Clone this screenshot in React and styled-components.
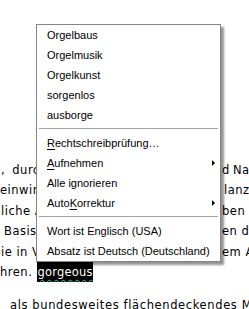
import React from "react";
import styled, { createGlobalStyle } from "styled-components";

const GlobalStyle = createGlobalStyle`
  html, body { margin: 0; padding: 0; background: #ffffff; }
`;

const Page = styled.div`
  position: relative;
  width: 249px;
  height: 309px;
  overflow: hidden;
  background: #ffffff;
`;

const Document = styled.div`
  padding-top: 160px;
  font-family: "DejaVu Sans", Verdana, sans-serif;
  font-size: 11.5px;
  letter-spacing: 0.5px;
  color: #000000;
`;

const Paragraph = styled.div`
  margin-top: ${(p) => p.$gap || 0}px;
`;

const Line = styled.div`
  display: grid;
  grid-template-columns: 222px 1fr;
  height: 20.4px;
  line-height: 20.4px;
  white-space: nowrap;
  overflow: hidden;
`;

const FullLine = styled.div`
  height: 20.4px;
  line-height: 20.4px;
  white-space: nowrap;
  overflow: hidden;
  letter-spacing: 0.62px;
  padding-left: ${(p) => p.$indent || 0}px;
`;

const Left = styled.span`
  padding-left: ${(p) => p.$indent || 0}px;
  word-spacing: ${(p) => p.$ws || 0}px;
  overflow: hidden;
`;

const Right = styled.span`
  padding-left: ${(p) => p.$indent || 0}px;
  word-spacing: ${(p) => p.$ws || 0}px;
  overflow: hidden;
`;

const Selected = styled.span`
  display: inline-block;
  margin-left: 1px;
  background: #000000;
  color: #ffffff;
  height: 20.4px;
  letter-spacing: 0.2px;
  text-decoration: underline wavy #3cc8d8;
  text-decoration-thickness: 1px;
  text-underline-offset: 3px;
`;

const Menu = styled.div`
  position: absolute;
  left: 36px;
  top: 24px;
  width: 183px;
  background: #ffffff;
  border: 1px solid #858585;
  box-shadow: 3px 3px 2px rgba(0, 0, 0, 0.42);
  font-family: "Liberation Sans", Arial, sans-serif;
  font-size: 11px;
  color: #000000;
`;

const Item = styled.div`
  display: flex;
  align-items: center;
  justify-content: space-between;
  height: 20px;
  padding: 0 5px 0 10px;
  white-space: nowrap;
`;

const Key = styled.span`
  text-decoration: underline;
  text-underline-offset: 2px;
`;

const Arrow = styled.span`
  width: 0;
  height: 0;
  border-left: 3px solid #000000;
  border-top: 3px solid transparent;
  border-bottom: 3px solid transparent;
`;

const Separator = styled.div`
  height: 1px;
  margin: 3px 2px 4px;
  background: #a3a3a3;
`;

export default function App() {
  return (
    <Page>
      <GlobalStyle />
      <Document>
        <Paragraph>
          <Line>
            <Left $indent={1} $ws={3}>, durch</Left>
            <Right $ws={-1}>d Na</Right>
          </Line>
          <Line>
            <Left>einwirk</Left>
            <Right $indent={2}>lanz</Right>
          </Line>
          <Line>
            <Left $indent={1}>liche A</Left>
            <Right>ben</Right>
          </Line>
          <Line>
            <Left $indent={4}>Basis</Left>
            <Right>en d</Right>
          </Line>
          <Line>
            <Left $indent={1}>ie in Ve</Left>
            <Right>em A</Right>
          </Line>
          <Line>
            <Left>
              hren. <Selected>gorgeous</Selected>
            </Left>
            <Right />
          </Line>
        </Paragraph>
        <Paragraph $gap={13}>
          <FullLine $indent={10}>als bundesweites flächendeckendes Messnetz</FullLine>
        </Paragraph>
      </Document>

      <Menu>
        <Item>Orgelbaus</Item>
        <Item>Orgelmusik</Item>
        <Item>Orgelkunst</Item>
        <Item>sorgenlos</Item>
        <Item>ausborge</Item>
        <Separator />
        <Item>
          <span>
            <Key>R</Key>echtschreibprüfung…
          </span>
        </Item>
        <Item>
          <span>
            <Key>A</Key>ufnehmen
          </span>
          <Arrow />
        </Item>
        <Item>Alle ignorieren</Item>
        <Item>
          <span>
            Auto<Key>K</Key>orrektur
          </span>
          <Arrow />
        </Item>
        <Separator />
        <Item>Wort ist Englisch (USA)</Item>
        <Item>Absatz ist Deutsch (Deutschland)</Item>
      </Menu>
    </Page>
  );
}
